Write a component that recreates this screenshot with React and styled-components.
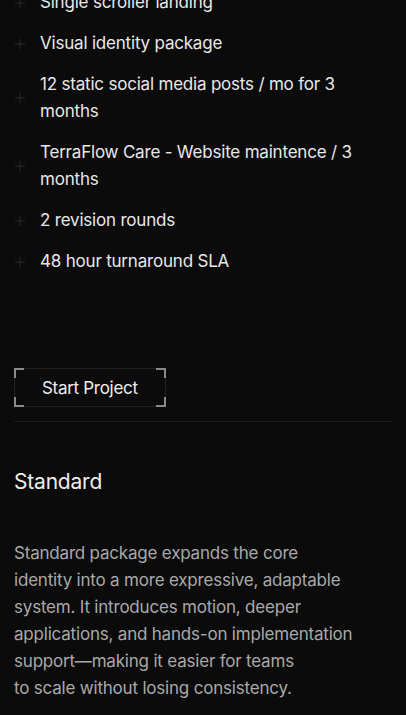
import React from 'react'
import styled, { createGlobalStyle } from 'styled-components'

const Global = createGlobalStyle`
    html, body {
        margin: 0;
        padding: 0;
        background: #0b0b0b;
        overflow: hidden;
    }
    body {
        font-family: 'Inter', 'Liberation Sans', sans-serif;
        color: #e6e6e6;
        -webkit-font-smoothing: antialiased;
    }
`;

const Page = styled.div`
    width: 406px;
    height: 715px;
    padding: 0 14px;
    box-sizing: border-box;
    overflow: hidden;
`;

const Scroller = styled.div`
    margin-top: -11px;
`;

const Features = styled.ul`
    list-style: none;
    margin: 0;
    padding: 0;
    display: flex;
    flex-direction: column;
    gap: 14px;
`;

const Feature = styled.li`
    display: flex;
    align-items: center;
    gap: 14px;
    font-size: 17px;
    line-height: 27px;
    letter-spacing: -0.2px;
    color: #e8e8e8;
`;

const Plus = styled.span`
    flex: none;
    width: 12px;
    display: flex;
    justify-content: center;
    color: #2a2a2a;
`;

const Button = styled.button`
    position: relative;
    margin-top: 93px;
    height: 39px;
    padding: 0 27px;
    background: #0b0b0b;
    border: 1px solid #222222;
    color: #eeeeee;
    font-family: inherit;
    font-size: 17px;
    letter-spacing: -0.3px;
`;

const Corner = styled.span`
    position: absolute;
    width: 8px;
    height: 8px;
    border-color: #8a8a8a;
    border-style: solid;
    border-width: 0;
    ${p => p.$top ? 'top: -1px;' : 'bottom: -1px;'}
    ${p => p.$left ? 'left: -1px;' : 'right: -1px;'}
    ${p => p.$top ? 'border-top-width: 2px;' : 'border-bottom-width: 2px;'}
    ${p => p.$left ? 'border-left-width: 2px;' : 'border-right-width: 2px;'}
`;

const Divider = styled.hr`
    margin: 14px 0 0;
    border: 0;
    border-top: 1px solid #1c1c1c;
`;

const Title = styled.h2`
    margin: 46px 0 0;
    font-weight: 400;
    font-size: 21px;
    line-height: 28px;
    letter-spacing: -0.2px;
    color: #ededed;
`;

const Body = styled.p`
    margin: 44px 0 0;
    font-size: 17px;
    line-height: 27px;
    letter-spacing: -0.2px;
    color: #a9a9a9;
`;

const PlusIcon = () => (
    <svg width="10" height="10" viewBox="0 0 10 10">
        <path d="M5 0v10M0 5h10" stroke="currentColor" strokeWidth="1" />
    </svg>
);

const features = [
    'Single scroller landing',
    'Visual identity package',
    '12 static social media posts / mo for 3 months',
    'TerraFlow Care - Website maintence / 3 months',
    '2 revision rounds',
    '48 hour turnaround SLA',
];

export default () => (
    <Page>
        <Global />
        <Scroller>
            <Features>
                {features.map(f => (
                    <Feature key={f}>
                        <Plus><PlusIcon /></Plus>
                        <span>{f}</span>
                    </Feature>
                ))}
            </Features>
            <Button>
                <Corner $top $left />
                <Corner $top />
                <Corner $left />
                <Corner />
                Start Project
            </Button>
            <Divider />
            <Title>Standard</Title>
            <Body>
                Standard package expands the core<br />
                identity into a more expressive, adaptable<br />
                system. It introduces motion, deeper<br />
                applications, and hands-on implementation<br />
                support—making it easier for teams<br />
                to scale without losing consistency.
            </Body>
        </Scroller>
    </Page>
)
